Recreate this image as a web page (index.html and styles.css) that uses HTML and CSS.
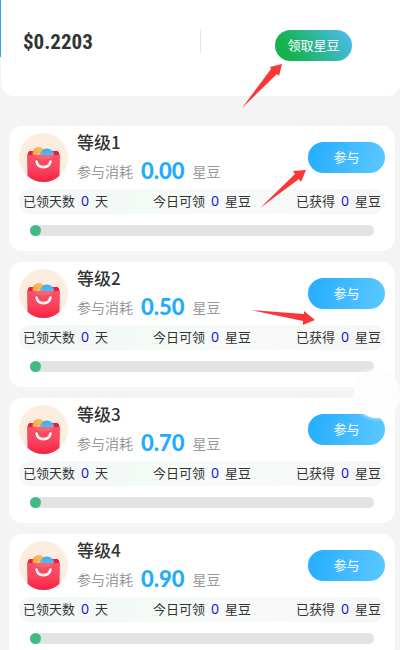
FILE: index.html
```html
<!DOCTYPE html>
<html lang="zh-CN">
<head>
<meta charset="utf-8">
<meta name="viewport" content="width=device-width, initial-scale=1">
<title>星豆</title>
<link rel="stylesheet" href="styles.css">
</head>
<body>
<svg class="defs" aria-hidden="true">
  <defs>
    <linearGradient id="bagFill" x1="0" y1="0" x2="0" y2="1">
      <stop offset="0" stop-color="#f65068"/><stop offset=".5" stop-color="#fc4460"/><stop offset="1" stop-color="#f5213f"/>
    </linearGradient>
    <linearGradient id="ballBlue" x1="0" y1="0" x2="0" y2="1">
      <stop offset="0" stop-color="#43a8ea"/><stop offset="1" stop-color="#7ccff5"/>
    </linearGradient>
    <linearGradient id="ballGold" x1="0" y1="0" x2="1" y2="0">
      <stop offset="0" stop-color="#f7a43c"/><stop offset="1" stop-color="#fbc875"/>
    </linearGradient>
    <clipPath id="disc"><circle cx="24.5" cy="24.5" r="24.5"/></clipPath>
  </defs>
  <symbol id="bag" viewBox="0 0 49 49">
    <circle cx="24.5" cy="24.5" r="24.5" fill="#fbeedf"/>
    <g clip-path="url(#disc)">
      <path d="M10.500 18h28q2 1 2 5h-32q0-4 2-5z" fill="#e3213f"/>
      <circle cx="20" cy="20.500" r="6.500" fill="url(#ballGold)"/>
      <circle cx="28" cy="22.500" r="7" fill="url(#ballBlue)"/>
      <path d="M8 22h33l-.5 22q-.3 5-5 5h-22q-4.700 0-5-5z" fill="url(#bagFill)"/>
      <path d="M16 22h18v2q-9 5-18 0z" fill="#f98a86" opacity=".35"/>
      <path d="M17.500 28.500c1.500 7.500 12.500 7.500 14 0" fill="none" stroke="#fff6f1" stroke-width="2.600" stroke-linecap="round"/>
    </g>
  </symbol>
</svg>

<header class="banner">
  <div class="summary">
    <div class="balance">$0.2203</div>
    <div class="claim-box"><button class="pill claim" type="button">领取星豆</button></div>
  </div>
</header>

<main class="levels">
  <article class="card">
    <div class="card-head">
      <svg class="avatar" aria-hidden="true"><use href="#bag"/></svg>
      <div class="info"><h2>等级1</h2><p>参与消耗<strong>0.00</strong>星豆</p></div>
      <button class="pill join" type="button">参与</button>
    </div>
    <div class="stats"><span>已领天数<b>0</b>天</span><span>今日可领<b>0</b>星豆</span><span>已获得<b>0</b>星豆</span></div>
    <div class="track"><i></i></div>
  </article>
  <article class="card">
    <div class="card-head">
      <svg class="avatar" aria-hidden="true"><use href="#bag"/></svg>
      <div class="info"><h2>等级2</h2><p>参与消耗<strong>0.50</strong>星豆</p></div>
      <button class="pill join" type="button">参与</button>
    </div>
    <div class="stats"><span>已领天数<b>0</b>天</span><span>今日可领<b>0</b>星豆</span><span>已获得<b>0</b>星豆</span></div>
    <div class="track"><i></i></div>
  </article>
  <article class="card">
    <div class="card-head">
      <svg class="avatar" aria-hidden="true"><use href="#bag"/></svg>
      <div class="info"><h2>等级3</h2><p>参与消耗<strong>0.70</strong>星豆</p></div>
      <button class="pill join" type="button">参与</button>
    </div>
    <div class="stats"><span>已领天数<b>0</b>天</span><span>今日可领<b>0</b>星豆</span><span>已获得<b>0</b>星豆</span></div>
    <div class="track"><i></i></div>
  </article>
  <article class="card">
    <div class="card-head">
      <svg class="avatar" aria-hidden="true"><use href="#bag"/></svg>
      <div class="info"><h2>等级4</h2><p>参与消耗<strong>0.90</strong>星豆</p></div>
      <button class="pill join" type="button">参与</button>
    </div>
    <div class="stats"><span>已领天数<b>0</b>天</span><span>今日可领<b>0</b>星豆</span><span>已获得<b>0</b>星豆</span></div>
    <div class="track"><i></i></div>
  </article>
</main>

<div class="float-ball"></div>
<svg class="arrows" viewBox="0 0 400 650" aria-hidden="true">
  <path d="M242 108L271 69L270 67L282 64L279 76L277 74Z"/>
  <path d="M260 208L295 174L293 171L306 170L301 182L299 179Z"/>
  <path d="M251 310L304 314L304 311L315 320L303 325L303 321Z"/>
</svg>
</body>
</html>
```
FILE: styles.css
```css
* {
  box-sizing: border-box;
}

body {
  position: relative;
  margin: 0;
  min-height: 100vh;
  background: #f4f4f5;
  color: #333;
  font-family: "Noto Sans", "Noto Sans CJK SC", sans-serif;
}

html {
  scrollbar-width: none;
}

.defs {
  position: absolute;
  width: 0;
  height: 0;
}

.banner {
  padding-left: 1px;
  background: linear-gradient(#27aaf8, #27aaf8) 0 0 / 1px 57px no-repeat;
}

.summary {
  display: grid;
  grid-template-columns: 1fr 1fr;
  height: 96px;
  padding-top: 29px;
  background: #fff;
  border-radius: 0 0 13px 13px;
}

.balance {
  height: 24px;
  padding-left: 22px;
  border-right: 1px solid #e4e4e6;
  font: bold 21px/26px "Liberation Sans Narrow", "Roboto Condensed", Roboto, sans-serif;
}

.claim-box {
  padding: 1px 48px 0 0;
  text-align: right;
}

.pill {
  flex: none;
  width: 77px;
  height: 31px;
  padding: 0 0 2px;
  border: 0;
  border-radius: 16px;
  color: #fff;
  font: 13px/29px "Noto Sans CJK SC", sans-serif;
}

.claim {
  background: linear-gradient(60deg, #16b24d 20%, #4abbec 95%);
}

.join {
  margin-top: 9px;
  background: linear-gradient(100deg, #24adff, #5cc8ff);
}

.levels {
  display: grid;
  gap: 11px;
  padding: 30px 5px 0 9px;
}

.card {
  height: 125px;
  padding: 7px 10px 0;
  background: #fff;
  border-radius: 13px;
}

.card-head {
  display: flex;
  align-items: flex-start;
  height: 56px;
}

.avatar {
  flex: none;
  width: 49px;
  height: 49px;
}

.info {
  flex: 1;
  padding-left: 9px;
}

.info h2 {
  margin: 0;
  color: #333;
  font: 500 17px/18px "Noto Sans CJK SC", sans-serif;
}

.info p {
  display: flex;
  margin: 8px 0 0;
  color: #999;
  font-size: 14px;
  line-height: 26px;
}

.info strong {
  margin: 0 8px;
  color: #22adfb;
  font: 900 22px/24px Lato, sans-serif;
}

.stats {
  display: flex;
  justify-content: space-between;
  height: 25px;
  padding: 0 4px;
  background: linear-gradient(90deg, #f3f7f7, #f4faf6 35%, #f8faf9 65%, #f5f7f7);
  border-radius: 12px;
  font-size: 13px;
  line-height: 24px;
}

.stats b {
  margin: 0 6px;
  color: #1b18d8;
  font-size: 14px;
  font-weight: 400;
}

.track {
  height: 11px;
  margin: 11px 11px 0;
  background: #e3e3e3;
  border-radius: 6px;
}

.track i {
  display: block;
  width: 11px;
  height: 11px;
  background: #3cbc80;
  border-radius: 50%;
}

.float-ball {
  position: absolute;
  top: 370px;
  right: 0;
  width: 46px;
  height: 48px;
  border-radius: 24px;
  background: #fdfdfd;
  box-shadow: 0 0 4px #fdfdfd;
}

.arrows {
  position: absolute;
  top: 0;
  left: 0;
  width: 400px;
  height: 650px;
  fill: #fb3638;
  pointer-events: none;
}
```
